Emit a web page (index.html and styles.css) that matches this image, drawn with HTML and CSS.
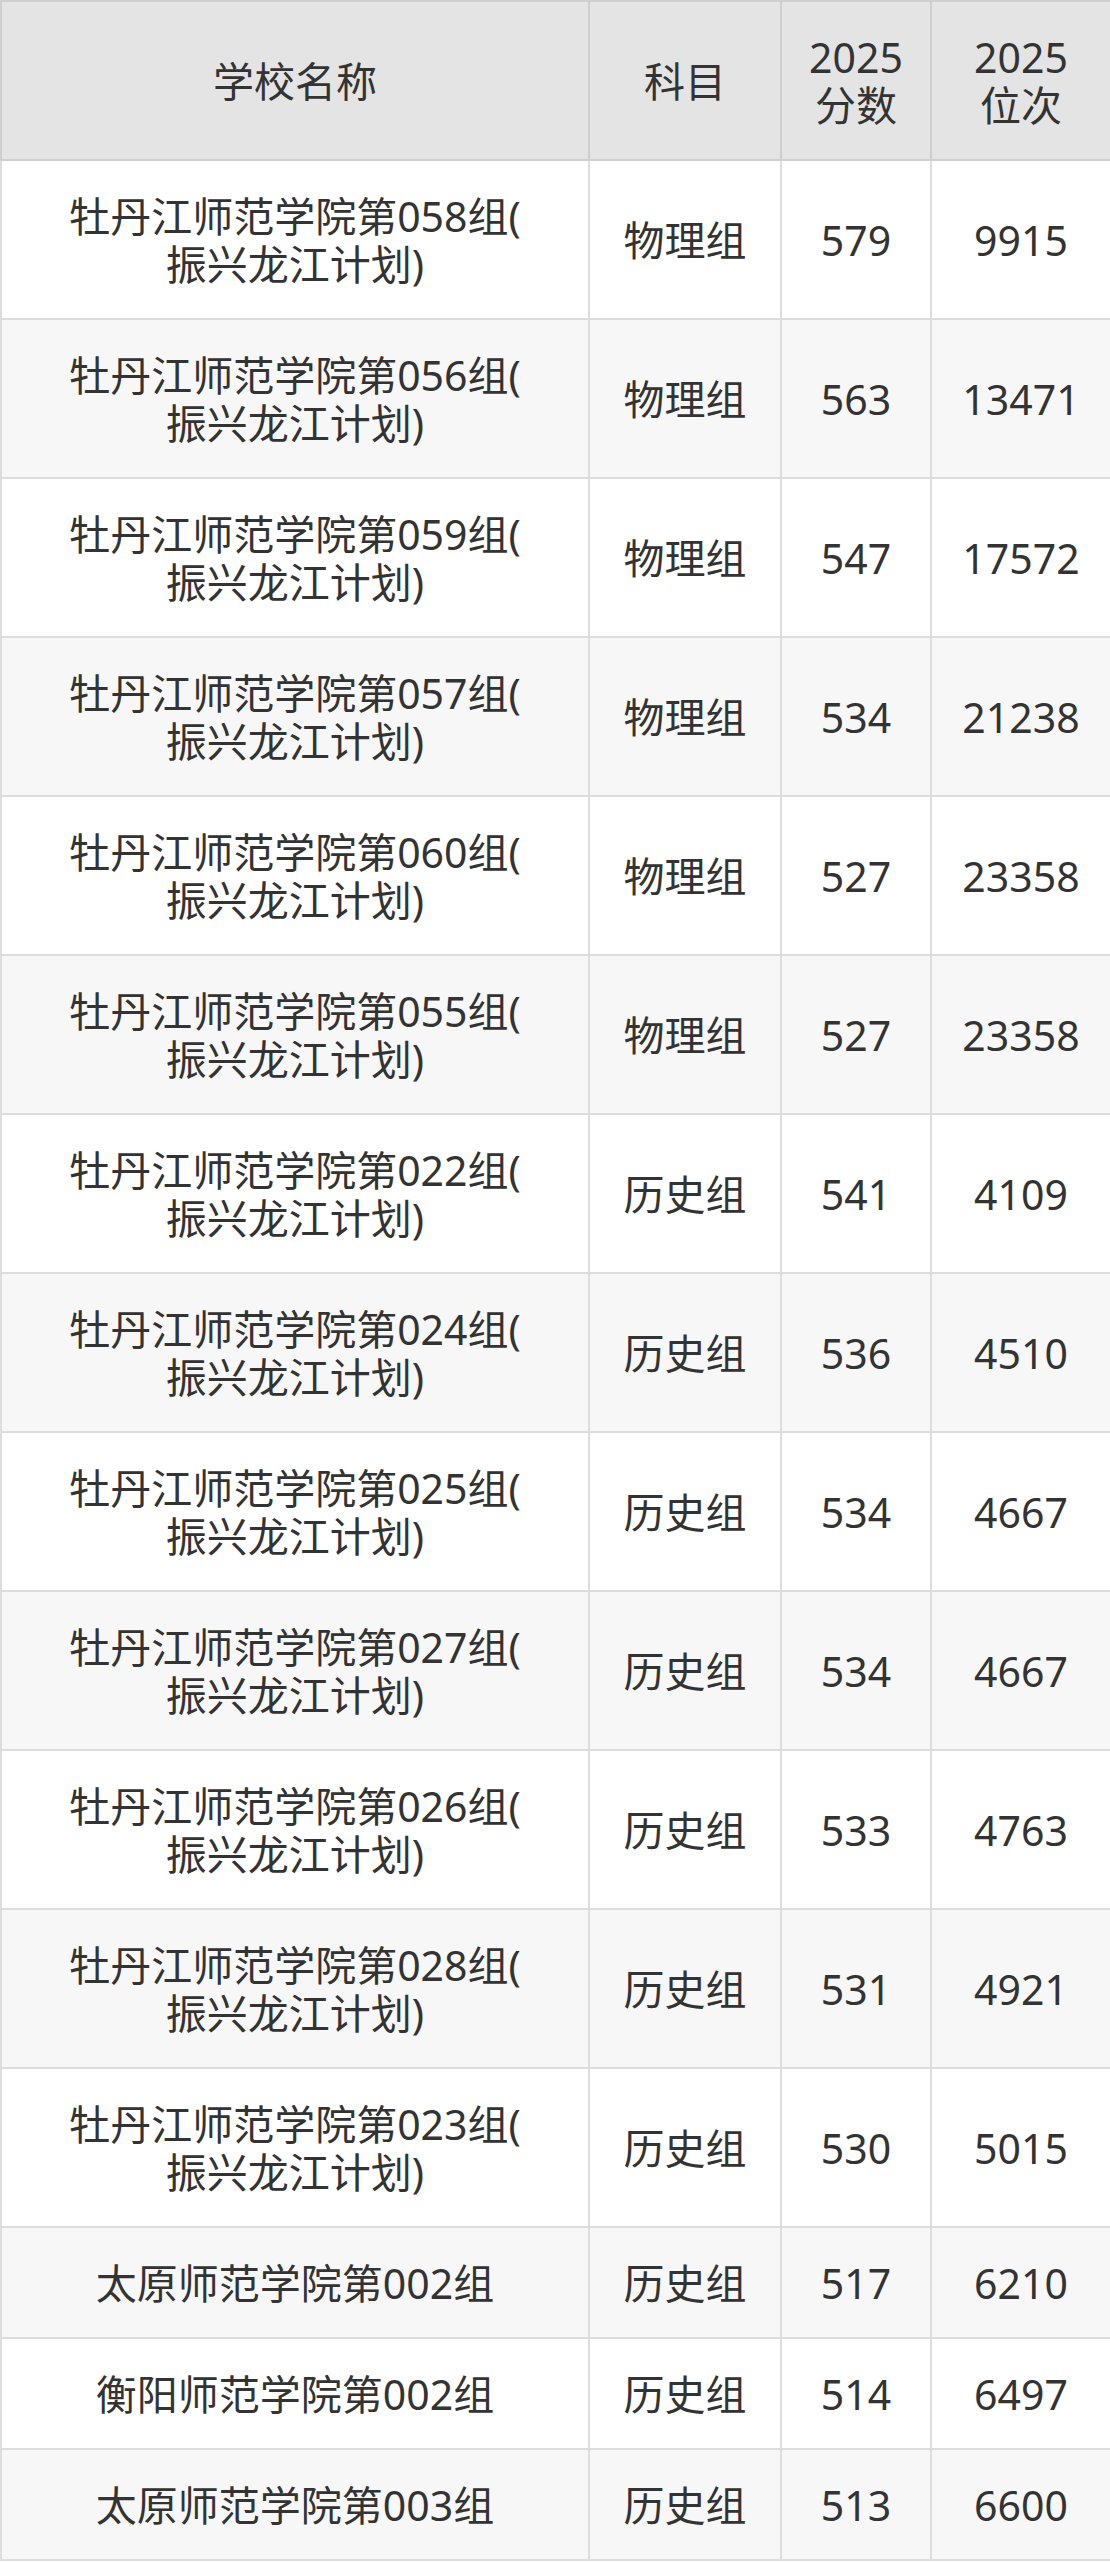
FILE: index.html
```html
<!DOCTYPE html>
<html lang="zh-CN">
<head>
<meta charset="utf-8">
<title>分数线</title>
<link rel="stylesheet" href="styles.css">
</head>
<body>
<table class="score-table">
  <colgroup>
    <col class="c-name">
    <col class="c-subj">
    <col class="c-score">
    <col class="c-rank">
  </colgroup>
  <thead>
    <tr>
      <th>学校名称</th>
      <th>科目</th>
      <th>2025<br>分数</th>
      <th>2025<br>位次</th>
    </tr>
  </thead>
  <tbody>
    <tr><td>牡丹江师范学院第058组(<br>振兴龙江计划)</td><td>物理组</td><td>579</td><td>9915</td></tr>
    <tr><td>牡丹江师范学院第056组(<br>振兴龙江计划)</td><td>物理组</td><td>563</td><td>13471</td></tr>
    <tr><td>牡丹江师范学院第059组(<br>振兴龙江计划)</td><td>物理组</td><td>547</td><td>17572</td></tr>
    <tr><td>牡丹江师范学院第057组(<br>振兴龙江计划)</td><td>物理组</td><td>534</td><td>21238</td></tr>
    <tr><td>牡丹江师范学院第060组(<br>振兴龙江计划)</td><td>物理组</td><td>527</td><td>23358</td></tr>
    <tr><td>牡丹江师范学院第055组(<br>振兴龙江计划)</td><td>物理组</td><td>527</td><td>23358</td></tr>
    <tr><td>牡丹江师范学院第022组(<br>振兴龙江计划)</td><td>历史组</td><td>541</td><td>4109</td></tr>
    <tr><td>牡丹江师范学院第024组(<br>振兴龙江计划)</td><td>历史组</td><td>536</td><td>4510</td></tr>
    <tr><td>牡丹江师范学院第025组(<br>振兴龙江计划)</td><td>历史组</td><td>534</td><td>4667</td></tr>
    <tr><td>牡丹江师范学院第027组(<br>振兴龙江计划)</td><td>历史组</td><td>534</td><td>4667</td></tr>
    <tr><td>牡丹江师范学院第026组(<br>振兴龙江计划)</td><td>历史组</td><td>533</td><td>4763</td></tr>
    <tr><td>牡丹江师范学院第028组(<br>振兴龙江计划)</td><td>历史组</td><td>531</td><td>4921</td></tr>
    <tr><td>牡丹江师范学院第023组(<br>振兴龙江计划)</td><td>历史组</td><td>530</td><td>5015</td></tr>
    <tr><td>太原师范学院第002组</td><td>历史组</td><td>517</td><td>6210</td></tr>
    <tr><td>衡阳师范学院第002组</td><td>历史组</td><td>514</td><td>6497</td></tr>
    <tr><td>太原师范学院第003组</td><td>历史组</td><td>513</td><td>6600</td></tr>
  </tbody>
</table>
</body>
</html>
```

FILE: styles.css
```css
html, body {
  margin: 0;
  padding: 0;
  background: #ffffff;
}

body {
  font-family: "Noto Sans", "Open Sans", "Noto Sans CJK SC", sans-serif;
  color: #333333;
}

.score-table {
  width: 1110px;
  table-layout: fixed;
  border-collapse: collapse;
  font-size: 41px;
  line-height: 48px;
}

.c-name { width: 588px; }
.c-subj { width: 192px; }
.c-score { width: 150px; }
.c-rank { width: 180px; }

.score-table th,
.score-table td {
  padding: 30.5px 4px;
  text-align: center;
  vertical-align: middle;
  font-weight: normal;
  white-space: nowrap;
}

.score-table th {
  background: #e4e4e4;
  border: 2px solid #cfcfcf;
}

.score-table td {
  border: 2px solid #dddddd;
}

.score-table tbody tr:nth-child(odd) td {
  background: #ffffff;
}

.score-table tbody tr:nth-child(even) td {
  background: #f7f7f7;
}
```
